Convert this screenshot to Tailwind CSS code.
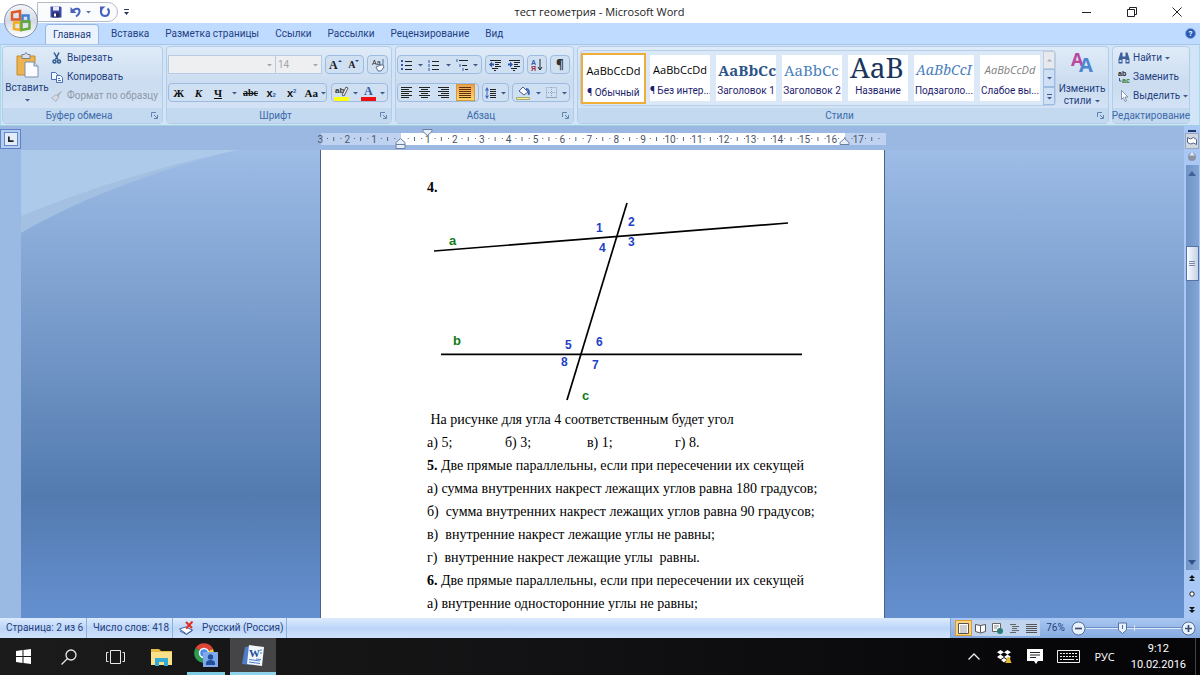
<!DOCTYPE html>
<html lang="ru">
<head>
  <meta charset="UTF-8" />
  <meta name="viewport" content="width=device-width, initial-scale=1.0" />
  <title>тест геометрия - Microsoft Word</title>
  <script src="https://cdn.jsdelivr.net/npm/@tailwindcss/browser@4"></script>
</head>
<body class="h-screen flex flex-col overflow-hidden whitespace-nowrap bg-white font-[Roboto,'Open_Sans',sans-serif] text-[10px] leading-3 text-[#1f3f7f]">

  <!-- Title bar -->
  <header class="relative flex h-[23px] shrink-0 items-center bg-white">
    <div class="ml-[37px] flex h-5 w-[81px] items-center gap-2 rounded-r-full border border-[#b5bcc8] bg-[#fafbfd] pl-3">
      <button aria-label="Сохранить">
        <svg class="size-3" viewBox="0 0 12 12"><path d="M.5.5h10l1 1v10H.5z" fill="#3d49a8"/><path d="M3 .5h6v4H3z" fill="#e8ecf8"/><path d="M2.500 6.500h7v5h-7z" fill="#222b66"/><path d="M4 7.500h2v3H4z" fill="#fff"/></svg>
      </button>
      <button aria-label="Отменить" class="flex items-center gap-1">
        <svg class="size-3" viewBox="0 0 12 12" fill="none" stroke="#4660bd" stroke-width="2"><path d="M3 4.500c3-3 7-2 6.500 1.500C9 8.500 7.500 9.500 6 10.500"/><path d="M.5 1v6h6z" fill="#4660bd" stroke="none"/></svg>
        <svg class="h-1 w-[5px]" viewBox="0 0 5 4"><path d="M0 1h5L2.500 3.500z" fill="#6275a5"/></svg>
      </button>
      <button aria-label="Повторить">
        <svg class="size-3" viewBox="0 0 12 12" fill="none" stroke="#4660bd" stroke-width="2"><path d="M8.500 2.500C11.200 5 10 10 6 10S.8 5.500 3 3"/><path d="M6.500.5H1v5z" fill="#4660bd" stroke="none"/></svg>
      </button>
    </div>
    <button aria-label="Настройка панели" class="ml-[6px]">
      <svg class="h-2 w-[5px]" viewBox="0 0 5 8"><path d="M0 1h5v1H0zM0 4h5L2.500 7z" fill="#2d3b62"/></svg>
    </button>
    <h1 class="flex-1 text-center font-['Open_Sans',sans-serif] text-[11px] text-[#222]">тест геометрия - Microsoft Word</h1>
    <div class="flex w-[130px] items-center justify-between pr-[18px]">
      <button aria-label="Свернуть" class="ml-3"><svg class="size-[10px]" viewBox="0 0 10 10"><path d="M0 5.500h9" stroke="#222"/></svg></button>
      <button aria-label="Восстановить"><svg class="size-[10px]" viewBox="0 0 10 10" fill="none" stroke="#222"><path d="M.5 2.500h7v7h-7zM2.500 2.500v-2h7v7h-2"/></svg></button>
      <button aria-label="Закрыть"><svg class="size-[10px]" viewBox="0 0 10 10" stroke="#222"><path d="M.5.5l9 9M9.500.5l-9 9"/></svg></button>
    </div>
    <button aria-label="Кнопка Office" class="absolute top-1 left-1 z-10 flex size-[34px] items-center justify-center rounded-full border border-[#8791a5] bg-linear-to-b from-[#f4f6fa] via-[#d3dae6] to-[#fdfeff]">
      <svg class="size-6" viewBox="0 0 24 24" fill="none" stroke-width="2.500">
        <path d="M3 3.500l8-1.500v8.500H3z" stroke="#dd5a26"/>
        <path d="M13.500 6.500h6v6h-6z" stroke="#3c83cf"/>
        <path d="M5 13.500h6.500V21L5 20z" stroke="#efae21"/>
        <path d="M12.500 12.500h8v7l-8 1.500z" stroke="#67a83a"/>
      </svg>
    </button>
  </header>

  <!-- Tabs -->
  <nav class="flex h-[21px] shrink-0 items-end bg-[#bfdbff] pl-[45px]">
    <a href="#" class="mr-1 flex h-5 items-center rounded-t-sm border border-b-0 border-[#94b7e4] bg-[#e9f2fd] px-[7px]">Главная</a>
    <a href="#" class="flex h-5 items-center px-2">Вставка</a>
    <a href="#" class="flex h-5 items-center px-2">Разметка страницы</a>
    <a href="#" class="flex h-5 items-center px-2">Ссылки</a>
    <a href="#" class="flex h-5 items-center px-2">Рассылки</a>
    <a href="#" class="flex h-5 items-center px-2">Рецензирование</a>
    <a href="#" class="flex h-5 items-center px-2">Вид</a>
    <button aria-label="Справка" class="mr-1 mb-[5px] ml-auto flex size-[11px] items-center justify-center rounded-full border border-[#7fa6e6] bg-[#2759b5] text-[8px] font-bold text-white">?</button>
  </nav>

  <!-- Ribbon -->
  <section class="flex h-[82px] shrink-0 gap-[3px] border border-t-[#a9c4e9] border-r-[#a6dcea] border-b-[#9fd0dd] border-l-[#a6dcea] bg-[#d2e4f8] p-px pr-[9px]">

    <!-- Clipboard -->
    <div class="flex w-[161px] flex-col rounded-sm border border-[#b3cde8] bg-linear-to-b from-[#dfebf8] via-[#cbdcf0] to-[#d9e8f8]">
      <div class="flex flex-1 gap-1 px-1">
        <button class="flex w-10 flex-col items-center pt-[5px]">
          <svg class="h-[26px] w-6" viewBox="0 0 24 26">
            <path d="M2 4h18v19H2z" fill="#edb44e" stroke="#c58a2d"/><path d="M7 2.500h2.500L11 .5l1.500 2H15v4H7z" fill="#dbe1ea" stroke="#77808f"/>
            <path d="M10 10h9l4 4v11H10z" fill="#fafcff" stroke="#7d8eb0"/><path d="M19 10v4h4" fill="#cbd8ee" stroke="#7d8eb0"/>
          </svg>
          <span class="mt-1">Вставить</span>
          <svg class="mt-1 h-1 w-[5px]" viewBox="0 0 5 4"><path d="M0 1h5L2.500 3.500z" fill="#405a8c"/></svg>
        </button>
        <div class="flex flex-col gap-[7px] pt-[5px]">
          <button class="flex items-center gap-1">
            <svg class="size-3" viewBox="0 0 12 12" fill="none" stroke="#31588f" stroke-width="1.500"><path d="M3 .5l4 7M8 .5l-3.500 7"/><circle cx="3.500" cy="9.500" r="1.500"/><circle cx="8" cy="9.500" r="1.500"/></svg>
            Вырезать
          </button>
          <button class="flex items-center gap-1">
            <svg class="size-3" viewBox="0 0 12 12" fill="#f2f7ff" stroke="#4a6fb4"><path d="M.5 1.500h4l2 2v5h-6z"/><path d="M5.500 4.500h4l2 2v5h-6z"/><path d="M7 7.500h2M7 9.500h3"/></svg>
            Копировать
          </button>
          <button class="flex items-center gap-1 text-[#8e98a8]" disabled>
            <svg class="size-3" viewBox="0 0 12 12"><path d="M11.500.5L7 7 5 5.500 9 2z" fill="#a9b0bb"/><path d="M5 4.500l3 2.500-3 4.500L.5 8z" fill="#d6dae0" stroke="#9aa3b0" stroke-width=".7"/></svg>
            Формат по образцу
          </button>
        </div>
      </div>
      <div class="flex h-[15px] items-center bg-[#c2d9f0] px-1 text-[#3e6aaa]">
        <span class="flex-1 text-center">Буфер обмена</span>
        <svg class="size-[7px]" viewBox="0 0 7 7" fill="none" stroke="#6683ad"><path d="M.5 5V.5H5M3 3l3 3M6.500 3v3.500H3"/></svg>
      </div>
    </div>

    <!-- Font -->
    <div class="flex w-[226px] flex-col rounded-sm border border-[#b3cde8] bg-linear-to-b from-[#dfebf8] via-[#cbdcf0] to-[#d9e8f8]">
      <div class="flex flex-1 flex-col gap-[9px] px-px pt-2">
        <div class="flex h-[19px] gap-[3px]">
          <div class="flex">
            <label class="relative flex w-[108px]">
              <select aria-label="Шрифт" disabled class="w-full appearance-none border border-[#b9cbe2] bg-[#eeeff1]"></select>
              <svg class="absolute top-[8px] right-1 h-1 w-[5px]" viewBox="0 0 5 4"><path d="M0 1h5L2.500 3.500z" fill="#a0a7b2"/></svg>
            </label>
            <label class="relative flex w-[46px]">
              <select aria-label="Размер" disabled class="w-full appearance-none border border-l-0 border-[#b9cbe2] bg-[#eeeff1] pl-[2px] text-[10px] text-[#a2a5aa]"><option>14</option></select>
              <svg class="absolute top-[8px] right-1 h-1 w-[5px]" viewBox="0 0 5 4"><path d="M0 1h5L2.500 3.500z" fill="#a0a7b2"/></svg>
            </label>
          </div>
          <div class="flex w-[39px] rounded-sm border border-[#9dbbdf] bg-[#d0e0f3] font-['Liberation_Serif',serif] font-bold text-[#222]">
            <button class="flex flex-1 items-center justify-center text-[12px]">A<svg class="mb-2 h-1 w-1" viewBox="0 0 4 4"><path d="M0 3L2 1l2 2z" fill="#26457f"/></svg></button>
            <button class="flex flex-1 items-center justify-center">A<svg class="mb-2 h-1 w-1" viewBox="0 0 4 4"><path d="M0 1h4L2 3z" fill="#26457f"/></svg></button>
          </div>
          <button aria-label="Очистить формат" class="flex w-[21px] items-center justify-center rounded-sm border border-[#9dbbdf] bg-[#d0e0f3]">
            <svg class="size-[14px]" viewBox="0 0 14 14"><text x="1" y="7" font-size="7" font-family="Liberation Sans" fill="#222">Aa</text><path d="M12 1v6" stroke="#5c6f93"/><path d="M5 9l5-2h2l1 2-3 4H7z" fill="#fdfdff" stroke="#5c6f93"/></svg>
          </button>
        </div>
        <div class="flex h-[19px] gap-1 text-[#111]">
          <div class="flex w-[159px] items-center rounded-sm border border-[#9dbbdf] bg-[#d0e0f3] font-['Liberation_Serif',serif] text-[11px] font-bold">
            <button class="w-5">Ж</button>
            <button class="w-5 italic">К</button>
            <button class="w-5 underline">Ч</button>
            <svg class="mx-1 h-1 w-[5px]" viewBox="0 0 5 4"><path d="M0 1h5L2.500 3.500z" fill="#405a8c"/></svg>
            <button class="w-5 text-[10px] line-through">abc</button>
            <button class="flex w-[22px] items-end justify-center font-['Liberation_Sans',sans-serif]">x<span class="text-[6px] leading-2 text-[#2d5fae]">2</span></button>
            <button class="flex w-[20px] items-start justify-center font-['Liberation_Sans',sans-serif]">x<span class="text-[6px] leading-2 text-[#2d5fae]">2</span></button>
            <button class="w-5">Aa</button>
            <svg class="h-1 w-[5px]" viewBox="0 0 5 4"><path d="M0 1h5L2.500 3.500z" fill="#405a8c"/></svg>
          </div>
          <div class="flex w-[57px] items-center justify-around rounded-sm border border-[#9dbbdf] bg-[#d0e0f3]">
            <button aria-label="Цвет выделения">
              <svg class="h-4 w-[15px]" viewBox="0 0 15 16"><text x="1" y="8" font-size="8" font-weight="bold" font-family="Liberation Sans" fill="#333">ab</text><path d="M8 10l4-8 2 1-4 8z" fill="#f8f6d8" stroke="#556"/><path d="M0 12h15v4H0z" fill="#ffff10"/></svg>
            </button>
            <svg class="h-1 w-[5px]" viewBox="0 0 5 4"><path d="M0 1h5L2.500 3.500z" fill="#405a8c"/></svg>
            <button aria-label="Цвет текста">
              <svg class="h-4 w-[15px]" viewBox="0 0 15 16"><text x="3" y="10" font-size="12" font-weight="bold" font-family="Liberation Serif" fill="#31589e">A</text><path d="M0 12h15v4H0z" fill="#ee1010"/></svg>
            </button>
            <svg class="h-1 w-[5px]" viewBox="0 0 5 4"><path d="M0 1h5L2.500 3.500z" fill="#405a8c"/></svg>
          </div>
        </div>
      </div>
      <div class="flex h-[15px] items-center bg-[#c2d9f0] px-1 text-[#3e6aaa]">
        <span class="flex-1 text-center">Шрифт</span>
        <svg class="size-[7px]" viewBox="0 0 7 7" fill="none" stroke="#6683ad"><path d="M.5 5V.5H5M3 3l3 3M6.500 3v3.500H3"/></svg>
      </div>
    </div>

    <!-- Paragraph -->
    <div class="flex w-[179px] flex-col rounded-sm border border-[#b3cde8] bg-linear-to-b from-[#dfebf8] via-[#cbdcf0] to-[#d9e8f8]">
      <div class="flex flex-1 flex-col gap-[9px] px-px pt-2">
        <div class="flex h-[19px] gap-[3px]">
          <div class="flex w-[85px] items-center justify-around rounded-sm border border-[#9dbbdf] bg-[#d0e0f3]">
            <button aria-label="Маркеры"><svg class="size-3" viewBox="0 0 12 12"><path d="M4 2.500h7M4 6.500h7M4 10.500h7" stroke="#222"/><path d="M0 1h2v2H0zM0 5h2v2H0zM0 9h2v2H0z" fill="#3057a8"/></svg></button>
            <svg class="h-1 w-[5px]" viewBox="0 0 5 4"><path d="M0 1h5L2.500 3.500z" fill="#405a8c"/></svg>
            <button aria-label="Нумерация"><svg class="size-3" viewBox="0 0 12 12"><path d="M4 2.500h7M4 6.500h7M4 10.500h7" stroke="#222"/><path d="M1 1v3M1 5v3M1 9v3" stroke="#3057a8"/></svg></button>
            <svg class="h-1 w-[5px]" viewBox="0 0 5 4"><path d="M0 1h5L2.500 3.500z" fill="#405a8c"/></svg>
            <button aria-label="Многоуровневый список"><svg class="size-3" viewBox="0 0 12 12"><path d="M3 1.500h9M6 6.500h5M9 10.500h3" stroke="#222"/><path d="M1 0v3M4 5v3M7 9v3" stroke="#3057a8"/></svg></button>
            <svg class="h-1 w-[5px]" viewBox="0 0 5 4"><path d="M0 1h5L2.500 3.500z" fill="#405a8c"/></svg>
          </div>
          <div class="flex w-[39px] items-center justify-around rounded-sm border border-[#9dbbdf] bg-[#d0e0f3]">
            <button aria-label="Уменьшить отступ"><svg class="size-3" viewBox="0 0 12 12"><path d="M1 1.500h11M6 3.500h6M6 5.500h4M6 7.500h6M3 9.500h6M5 11.500h2" stroke="#222"/><path d="M0 5.500l3-3v2h2v2H3v2z" fill="#3057a8"/></svg></button>
            <button aria-label="Увеличить отступ"><svg class="size-3" viewBox="0 0 12 12"><path d="M1 1.500h11M6 3.500h6M6 5.500h4M6 7.500h6M3 9.500h6M5 11.500h2" stroke="#222"/><path d="M5 5.500l-3-3v2H0v2h2v2z" fill="#3057a8"/></svg></button>
          </div>
          <button aria-label="Сортировка" class="flex w-[20px] items-center justify-center rounded-sm border border-[#9dbbdf] bg-[#d0e0f3]">
            <svg class="size-3" viewBox="0 0 12 12"><text x="0" y="6" font-size="7" font-weight="bold" font-family="Liberation Sans" fill="#3057a8">А</text><text x="0" y="12" font-size="7" font-weight="bold" font-family="Liberation Sans" fill="#9c2a35">Я</text><path d="M9 0v10M7 8l2 3 2-3" fill="none" stroke="#222"/></svg>
          </button>
          <button class="flex w-[20px] items-center justify-center rounded-sm border border-[#9dbbdf] bg-[#d0e0f3] font-['Open_Sans',sans-serif] text-[12px] font-bold text-[#333]">¶</button>
        </div>
        <div class="flex h-[19px] gap-[3px]">
          <div class="flex w-[82px] items-center justify-around rounded-sm border border-[#9dbbdf] bg-[#d0e0f3]">
            <button aria-label="По левому краю"><svg class="h-[11px] w-3" viewBox="0 0 12 11" stroke="#222"><path d="M0 .5h11M0 2.500h8M0 4.500h11M0 6.500h8M0 8.500h11M0 10.500h8"/></svg></button>
            <button aria-label="По центру"><svg class="h-[11px] w-3" viewBox="0 0 12 11" stroke="#222"><path d="M0 .5h11M2 2.500h7M0 4.500h11M2 6.500h7M0 8.500h11M2 10.500h7"/></svg></button>
            <button aria-label="По правому краю"><svg class="h-[11px] w-3" viewBox="0 0 12 11" stroke="#222"><path d="M0 .5h11M3 2.500h8M0 4.500h11M3 6.500h8M0 8.500h11M3 10.500h8"/></svg></button>
            <button aria-label="По ширине" class="flex h-[17px] w-[19px] items-center justify-center border border-[#d69a3c] bg-linear-to-b from-[#f0a050] to-[#ffd76b]"><svg class="h-[11px] w-3" viewBox="0 0 12 11" stroke="#5b3208"><path d="M0 .5h12M0 2.500h12M0 4.500h12M0 6.500h12M0 8.500h12M0 10.500h12"/></svg></button>
          </div>
          <div class="flex w-[27px] items-center justify-around rounded-sm border border-[#9dbbdf] bg-[#d0e0f3]">
            <button aria-label="Интервал"><svg class="size-3" viewBox="0 0 12 12"><path d="M5 2.500h6M5 4.500h6M5 6.500h6M5 8.500h6M5 10.500h6" stroke="#222"/><path d="M2 0l2 3.500H0zM2 12l2-3.500H0zM1.500 3h1v6h-1z" fill="#3b66bd"/></svg></button>
            <svg class="h-1 w-[5px]" viewBox="0 0 5 4"><path d="M0 1h5L2.500 3.500z" fill="#405a8c"/></svg>
          </div>
          <div class="flex w-[58px] items-center justify-around rounded-sm border border-[#9dbbdf] bg-[#d0e0f3]">
            <button aria-label="Заливка"><svg class="h-[14px] w-[15px]" viewBox="0 0 15 14"><path d="M3 5l4-4 5 5-4 3z" fill="#f6f9ff" stroke="#4a5f8a"/><path d="M10 3c3 0 3.500 3 2.500 6" stroke="#3b66bd" stroke-width="1.800" fill="none"/><path d="M.5 11.500h13v2H.5z" fill="#f4f3a0" stroke="#a9a972"/></svg></button>
            <svg class="h-1 w-[5px]" viewBox="0 0 5 4"><path d="M0 1h5L2.500 3.500z" fill="#405a8c"/></svg>
            <button aria-label="Границы"><svg class="size-[11px]" viewBox="0 0 11 11" fill="none" stroke="#93a3bd"><path d="M.5.5h10v10H.5zM5.500 0v11M0 5.500h11" stroke-dasharray="1 1"/><path d="M0 10.500h11"/></svg></button>
            <svg class="h-1 w-[5px]" viewBox="0 0 5 4"><path d="M0 1h5L2.500 3.500z" fill="#405a8c"/></svg>
          </div>
        </div>
      </div>
      <div class="flex h-[15px] items-center bg-[#c2d9f0] px-1 text-[#3e6aaa]">
        <span class="flex-1 text-center">Абзац</span>
        <svg class="size-[7px]" viewBox="0 0 7 7" fill="none" stroke="#6683ad"><path d="M.5 5V.5H5M3 3l3 3M6.500 3v3.500H3"/></svg>
      </div>
    </div>

    <!-- Styles -->
    <div class="flex min-w-0 flex-1 flex-col rounded-sm border border-[#b3cde8] bg-linear-to-b from-[#dfebf8] via-[#cbdcf0] to-[#d9e8f8]">
      <div class="flex flex-1 items-start pt-[3px] pl-[2px]">
        <div class="flex min-w-0 flex-1 rounded-sm border border-[#b8cfe9] bg-[#dbe8f8]">
          <div class="grid h-[54px] min-w-0 flex-1 grid-cols-7 items-center text-center text-[#1e1e6e]">
            <button class="mr-px flex h-[51px] flex-col overflow-hidden border-2 border-[#efad3a] bg-white">
              <span class="flex h-8 w-full items-center justify-center font-['Open_Sans',sans-serif] text-[11px] text-black">AaBbCcDd</span><span class="w-full">¶ Обычный</span>
            </button>
            <button class="mx-[3px] flex h-[46px] flex-col overflow-hidden bg-white">
              <span class="flex h-[30px] w-full items-center justify-center font-['Open_Sans',sans-serif] text-[11px] text-black">AaBbCcDd</span><span class="w-full">¶ Без интер...</span>
            </button>
            <button class="mx-[3px] flex h-[46px] flex-col overflow-hidden bg-white">
              <span class="flex h-[30px] w-full items-center overflow-hidden pl-[2px] font-['Noto_Serif','DejaVu_Serif',serif] text-[15px] font-bold text-[#2c5488]">AaBbCc</span><span class="w-full">Заголовок 1</span>
            </button>
            <button class="mx-[3px] flex h-[46px] flex-col overflow-hidden bg-white">
              <span class="flex h-[30px] w-full items-center overflow-hidden pl-[2px] font-['Noto_Serif','DejaVu_Serif',serif] text-[15px] text-[#4a81bd]">AaBbCc</span><span class="w-full">Заголовок 2</span>
            </button>
            <button class="mx-[3px] flex h-[46px] flex-col overflow-hidden bg-white">
              <span class="flex h-[30px] w-full items-start overflow-hidden pl-[2px] font-['Noto_Serif','DejaVu_Serif',serif] text-[28px] leading-6 text-[#1b365d]">AaB</span><span class="w-full">Название</span>
            </button>
            <button class="mx-[3px] flex h-[46px] flex-col overflow-hidden bg-white">
              <span class="flex h-[30px] w-full items-center overflow-hidden pl-[2px] font-['Noto_Serif','DejaVu_Serif',serif] text-[14px] text-[#4a81bd] italic">AaBbCcI</span><span class="w-full">Подзаголо...</span>
            </button>
            <button class="mx-[3px] flex h-[46px] flex-col overflow-hidden bg-white">
              <span class="flex h-[30px] w-full items-center justify-center font-['Open_Sans',sans-serif] text-[11px] text-[#808080] italic">AaBbCcDd</span><span class="w-full">Слабое вы...</span>
            </button>
          </div>
          <div class="flex w-3 flex-col">
            <button aria-label="Вверх" class="flex flex-1 items-center justify-center border border-[#c4ccd8] bg-[#e6e9ee]"><svg class="h-1 w-[5px]" viewBox="0 0 5 4"><path d="M0 3.500h5L2.500 1z" fill="#a7adb8"/></svg></button>
            <button aria-label="Вниз" class="flex flex-1 items-center justify-center border border-[#9fbde2] bg-[#cfe0f5]"><svg class="h-1 w-[5px]" viewBox="0 0 5 4"><path d="M0 1h5L2.500 3.500z" fill="#405a8c"/></svg></button>
            <button aria-label="Все стили" class="flex flex-1 items-center justify-center border border-[#9fbde2] bg-[#cfe0f5]"><svg class="h-[7px] w-[5px]" viewBox="0 0 5 7"><path d="M0 1h5v1H0zM0 4h5L2.500 6.500z" fill="#405a8c"/></svg></button>
          </div>
        </div>
        <button class="flex w-[52px] flex-col items-center">
          <svg class="h-7 w-[26px]" viewBox="0 0 26 28" font-family="Open Sans" font-weight="bold">
            <text x="2" y="16" font-size="18" fill="#b9489f">A</text>
            <text x="10" y="22" font-size="20" fill="#4b86cf">A</text>
          </svg>
          <span class="mt-[5px]">Изменить</span>
          <span class="flex items-center gap-1">стили <svg class="h-1 w-[5px]" viewBox="0 0 5 4"><path d="M0 1h5L2.500 3.500z" fill="#405a8c"/></svg></span>
        </button>
      </div>
      <div class="flex h-[15px] items-center bg-[#c2d9f0] px-1 text-[#3e6aaa]">
        <span class="flex-1 text-center">Стили</span>
        <svg class="size-[7px]" viewBox="0 0 7 7" fill="none" stroke="#6683ad"><path d="M.5 5V.5H5M3 3l3 3M6.500 3v3.500H3"/></svg>
      </div>
    </div>

    <!-- Editing -->
    <div class="flex w-[78px] flex-col rounded-sm border border-[#b3cde8] bg-linear-to-b from-[#dfebf8] via-[#cbdcf0] to-[#d9e8f8]">
      <div class="flex flex-1 flex-col gap-[7px] pt-[5px] pl-[5px]">
        <button class="flex items-center gap-[3px]">
          <svg class="size-3" viewBox="0 0 12 12"><path d="M2.500.5h2v4h3v-4h2L11.500 7v4.500h-4V7h-3v4.500h-4V7z" fill="#3d5f9a"/><path d="M1.500 8h2v2h-2zM8.500 8h2v2h-2z" fill="#c8d8f0"/></svg>
          Найти
          <svg class="h-1 w-[5px]" viewBox="0 0 5 4"><path d="M0 1h5L2.500 3.500z" fill="#405a8c"/></svg>
        </button>
        <button class="flex items-center gap-[3px]">
          <svg class="size-3" viewBox="0 0 12 12" font-family="Liberation Sans" font-weight="bold" font-size="7"><text x="0" y="5" fill="#222">ab</text><text x="4" y="12" fill="#2b7a2b">ac</text><path d="M1.500 7v3h2" fill="none" stroke="#3057a8"/></svg>
          Заменить
        </button>
        <button class="flex items-center gap-[3px]">
          <svg class="size-3" viewBox="0 0 12 12"><path d="M3.500.5v9l2-2 1.500 4 1.500-.7L7 7h3z" fill="#fff" stroke="#6b7f9f" stroke-width=".8"/></svg>
          Выделить
          <svg class="h-1 w-[5px]" viewBox="0 0 5 4"><path d="M0 1h5L2.500 3.500z" fill="#405a8c"/></svg>
        </button>
      </div>
      <div class="flex h-[15px] items-center justify-center bg-[#c2d9f0] text-[#3e6aaa]">Редактирование</div>
    </div>
  </section>

  <!-- Workspace -->
  <main class="flex min-h-0 flex-1">
    <div class="flex min-w-0 flex-1 flex-col">
      <div class="flex h-6 shrink-0 bg-[#9ab8e1]">
        <button aria-label="Табуляция" class="mt-[3px] flex h-5 w-[21px] items-center justify-center border border-[#5b83c6] bg-[#b5cdf0]">
          <svg class="size-[14px] border border-[#6488c4] bg-[#e3edfa]" viewBox="0 0 14 14"><path d="M4.500 4v5.500H10" fill="none" stroke="#222" stroke-width="2"/></svg>
        </button>
        <div class="flex flex-1 justify-center">
          <svg id="ruler" class="h-6 w-[567px] overflow-visible" viewBox="0 0 567 24"></svg>
        </div>
      </div>
      <div class="flex min-h-0 flex-1">
        <div class="w-[21px] bg-[#9bbae3]"></div>
        <div class="relative flex flex-1 justify-center overflow-hidden bg-linear-to-b from-[#9dbce6] via-[#537bb0] via-74% to-[#6590d0]">
          <svg class="absolute top-0 left-0 h-[84px] w-[218px]" viewBox="0 0 218 84">
            <path d="M0 0h216C120 24 50 54 0 83z" fill="#a3c0e2"/>
            <path d="M0 0h216C130 18 60 42 0 66z" fill="#aecaeb"/>
          </svg>

          <!-- Page -->
          <article class="z-10 w-[565px] border-x border-[#4c6288] bg-white pt-[26px] pl-[106px] font-['Liberation_Serif',serif] text-[14px] leading-[23px] text-black">
            <p class="font-bold">4.</p>
            <svg class="h-[209px] w-[400px]" viewBox="427 199 400 209" font-family="Liberation Sans" font-size="12" font-weight="bold">
              <g stroke="#000" stroke-width="1.700">
                <path d="M434 251L788 223"/>
                <path d="M441 354.300H802"/>
                <path d="M627 203L567 400"/>
              </g>
              <g fill="#1e3fc8">
                <text x="596" y="232">1</text><text x="628" y="226">2</text>
                <text x="599" y="252">4</text><text x="628" y="246">3</text>
                <text x="565" y="349">5</text><text x="596" y="346">6</text>
                <text x="561" y="366">8</text><text x="592" y="369">7</text>
              </g>
              <g fill="#117a17" font-size="13">
                <text x="449" y="245">a</text><text x="453" y="345">b</text><text x="582" y="400">c</text>
              </g>
            </svg>
            <p class="whitespace-pre"> На рисунке для угла 4 соответственным будет угол</p>
            <p class="grid grid-cols-[78px_82px_88px_1fr]"><span>а) 5;</span><span>б) 3;</span><span>в) 1;</span><span>г) 8.</span></p>
            <p><b>5.</b> Две прямые параллельны, если при пересечении их секущей</p>
            <p>а) сумма внутренних накрест лежащих углов равна 180 градусов;</p>
            <p class="whitespace-pre">б)  сумма внутренних накрест лежащих углов равна 90 градусов;</p>
            <p class="whitespace-pre">в)  внутренние накрест лежащие углы не равны;</p>
            <p class="whitespace-pre">г)  внутренние накрест лежащие углы  равны.</p>
            <p><b>6.</b> Две прямые параллельны, если при пересечении их секущей</p>
            <p>а) внутренние односторонние углы не равны;</p>
          </article>
        </div>
      </div>
    </div>

    <!-- Scrollbar -->
    <div class="flex w-4 flex-col items-center bg-[#a9c8f5]">
      <div class="mt-1 h-[2px] w-2 bg-[#24386b]"></div>
      <button aria-label="Линейка" class="mt-px flex h-4 w-[14px] items-center justify-center border border-[#99a6bb] bg-[#cfd6e0]">
        <svg class="size-[10px]" viewBox="0 0 10 10"><path d="M.5 1.500l3 1.500 3-1.500 3 2v5l-3-1.500-3 1-3-1.500z" fill="#fff" stroke="#53648a"/></svg>
      </button>
      <svg class="my-[2px] size-3" viewBox="0 0 12 12"><circle cx="6" cy="6" r="4" fill="#8a94a6"/><path d="M3 4.500h6L6 1.500z" fill="#e6ebf3"/></svg>
      <div class="flex w-[13px] flex-1 flex-col items-center bg-linear-to-r from-[#6f94c6] to-[#83a6d4]">
        <svg class="mt-[6px] h-[5px] w-2" viewBox="0 0 8 5"><path d="M0 5h8L4 0z" fill="#42609a"/></svg>
        <div class="mt-[70px] flex h-[35px] w-full items-center justify-center border border-[#57739f] bg-linear-to-r from-[#fafcff] to-[#c3d1e6]">
          <svg class="size-[6px]" viewBox="0 0 6 6" stroke="#7d8ba6"><path d="M0 .5h6M0 2.500h6M0 4.500h6"/></svg>
        </div>
        <svg class="mt-auto mb-[5px] h-[5px] w-2" viewBox="0 0 8 5"><path d="M0 0h8L4 5z" fill="#34508a"/></svg>
      </div>
      <div class="flex h-12 flex-col items-center justify-around">
        <svg class="size-[6px]" viewBox="0 0 6 6" fill="#111"><path d="M0 3l3-3 3 3zM0 6l3-3 3 3z"/></svg>
        <svg class="size-[6px]" viewBox="0 0 6 6"><circle cx="3" cy="3" r="2.200" fill="#fff" stroke="#222"/></svg>
        <svg class="size-[6px]" viewBox="0 0 6 6" fill="#111"><path d="M0 0l3 3 3-3zM0 3l3 3 3-3z"/></svg>
      </div>
    </div>
  </main>

  <!-- Status bar -->
  <footer class="flex h-5 shrink-0 items-stretch bg-linear-to-b from-[#dcebfe] via-[#bdd6f8] to-[#cfe2fb]">
    <span class="flex w-[87px] items-center border-r border-[#8fb0dd] pl-[6px]">Страница: 2 из 6</span>
    <span class="flex w-[86px] items-center border-r border-[#8fb0dd] pl-[6px]">Число слов: 418</span>
    <span class="flex w-[114px] items-center gap-2 border-r border-[#8fb0dd] pl-[6px]">
      <svg class="h-[14px] w-[15px]" viewBox="0 0 15 14"><path d="M.5 8l6-2 7 3-6 4z" fill="#fff" stroke="#41659f"/><path d="M1 10l6.500 3.500 6-4" fill="none" stroke="#41659f"/><path d="M7 1l6 6M13.500.5L7 7.500" stroke="#dd2f1e" stroke-width="2"/></svg>
      Русский (Россия)
    </span>
    <div class="ml-auto flex items-center border-l border-[#7ea3d8] bg-linear-to-b from-[#a9c7f2] to-[#85abdf] pl-1">
      <button aria-label="Разметка" class="flex h-4 w-[17px] items-center justify-center border border-[#d99a37] bg-[#fdd27b]"><svg class="size-[11px]" viewBox="0 0 11 11"><path d="M.5.5h10v10H.5z" fill="#fff" stroke="#555"/><path d="M2 3h7M2 5h7M2 7h7M2 9h7" stroke="#777" stroke-width=".7"/></svg></button>
      <button aria-label="Чтение" class="flex h-4 w-[17px] items-center justify-center bg-[#c2d5ef]"><svg class="size-[11px]" viewBox="0 0 11 11"><path d="M.5 1.500l5 1 5-1v7l-5 1.500-5-1.500zM5.500 2.500v7" fill="#fff" stroke="#555"/></svg></button>
      <button aria-label="Веб-документ" class="flex h-4 w-[17px] items-center justify-center bg-[#c2d5ef]"><svg class="size-[11px]" viewBox="0 0 11 11"><path d="M.5.5h8v8h-8z" fill="#fff" stroke="#666"/><path d="M2 3h5M2 5h3" stroke="#888"/><circle cx="8" cy="8" r="3" fill="#2d7c77"/></svg></button>
      <button aria-label="Структура" class="flex h-4 w-[17px] items-center justify-center bg-[#c2d5ef]"><svg class="size-[11px]" viewBox="0 0 11 11" stroke="#666"><path d="M1 1.500h6M3 3.500h7M3 5.500h5M3 7.500h7M1 9.500h6"/></svg></button>
      <button aria-label="Черновик" class="flex h-4 w-[17px] items-center justify-center bg-[#c2d5ef]"><svg class="size-[11px]" viewBox="0 0 11 11" stroke="#555"><path d="M0 1.500h11M0 3.500h11M0 5.500h11M0 7.500h11M0 9.500h11"/></svg></button>
      <span class="w-[31px] text-center">76%</span>
      <button aria-label="Уменьшить"><svg class="size-[15px]" viewBox="0 0 15 15"><circle cx="7.500" cy="7.500" r="6.500" fill="#e9f1fc" stroke="#54709f"/><path d="M4 7.500h7" stroke="#3d4f70" stroke-width="1.700"/></svg></button>
      <svg class="h-4 w-[95px]" viewBox="0 0 95 16"><path d="M0 8.500h95" stroke="#dce9fb"/><path d="M0 7.500h95" stroke="#6d90c4"/><path d="M48.500 5v6" stroke="#dce9fb"/><path d="M32.500 3h8v7l-4 3.500-4-3.500z" fill="#e9f1fc" stroke="#54709f"/><path d="M36.500 5v4" stroke="#54709f"/></svg>
      <button aria-label="Увеличить" class="mr-1"><svg class="size-[15px]" viewBox="0 0 15 15"><circle cx="7.500" cy="7.500" r="6.500" fill="#e9f1fc" stroke="#54709f"/><path d="M4 7.500h7M7.500 4v7" stroke="#3d4f70" stroke-width="1.700"/></svg></button>
    </div>
  </footer>

  <!-- Taskbar -->
  <footer class="flex h-[37px] shrink-0 items-stretch bg-linear-to-r from-[#1b1b1b] via-[#111113] to-[#050508] text-white">
    <button aria-label="Пуск" class="flex w-[46px] items-center justify-center"><svg class="size-[15px]" viewBox="0 0 15 15" fill="#fff"><path d="M0 2l6.500-1v6H0zM7.500.9L15 0v7H7.500zM0 8h6.500v6L0 13zM7.500 8H15v7l-7.500-1z"/></svg></button>
    <button aria-label="Поиск" class="flex w-[46px] items-center justify-center"><svg class="size-4" viewBox="0 0 16 16" fill="none" stroke="#e8e8e8" stroke-width="1.300"><circle cx="10" cy="6" r="5"/><path d="M6.500 9.500L.5 15.500"/></svg></button>
    <button aria-label="Представление задач" class="flex w-[46px] items-center justify-center"><svg class="h-[14px] w-[19px]" viewBox="0 0 19 14" fill="none" stroke="#e8e8e8"><path d="M4.500.5h10v13h-10zM2.500 2.500h-2v9h2M16.500 2.500h2v9h-2"/></svg></button>
    <button aria-label="Проводник" class="flex w-[46px] items-center justify-center"><svg class="h-[18px] w-[21px]" viewBox="0 0 21 18"><path d="M0 1h8l2 2h11v14H0z" fill="#e9bd45"/><path d="M0 4h21v13H0z" fill="#fbe18a"/><path d="M4 18v-8h13v8h-4v-4H8v4z" fill="#35a9d8"/></svg></button>
    <button aria-label="Chrome" class="mr-[2px] flex w-11 flex-col items-center"><span class="flex flex-1 items-center"><svg class="size-6" viewBox="0 0 24 24"><path d="M10 10L1.500 5A10 10 0 0 1 19 6z" fill="#dd4437"/><path d="M10 10l9-4a10 10 0 0 1-9 14z" fill="#f7c92f"/><path d="M10 10v10A10 10 0 0 1 1.500 5z" fill="#2f9b50"/><circle cx="10" cy="10" r="4.500" fill="#4a8af0" stroke="#fff" stroke-width="1.500"/><path d="M9 9h15v15H9z" fill="#7fa9ea"/><circle cx="16.500" cy="14" r="2.700" fill="#234f9e"/><path d="M12 22v-2c0-4 9-4 9 0v2z" fill="#234f9e"/></svg></span><span class="h-[3px] w-[38px] bg-[#7fcbe0]"></span></button>
    <button aria-label="Word" class="flex w-[46px] flex-col items-center bg-[#454547]"><span class="flex flex-1 items-center"><svg class="h-[21px] w-[22px]" viewBox="0 0 22 21"><path d="M3 2l6-1v19l-9-1z" fill="#4d7cc9"/><path d="M7 0l15 2-2 19-15-2z" fill="#f2f6fd"/><text x="7" y="12" font-size="11" font-weight="bold" font-family="Liberation Serif" fill="#234f9e">W</text><path d="M14 14l5 .5M7 14.500l11 1.500M7 17l11 1.500M18 5h2M18 8h2" stroke="#4d7cc9"/></svg></span><span class="h-[3px] w-full bg-[#8ed3ea]"></span></button>
    <div class="ml-auto flex items-center font-['Open_Sans',sans-serif]">
      <svg class="h-[7px] w-3" viewBox="0 0 12 7" fill="none" stroke="#eee" stroke-width="1.300"><path d="M.5 6.500L6 1l5.500 5.500"/></svg>
      <svg class="ml-[17px] h-[14px] w-[15px]" viewBox="0 0 15 14"><path d="M3.500 0L7 2.300 3.500 4.600 0 2.300zM10.500 0L14 2.300l-3.500 2.300L7 2.300zM3.500 4.600L7 7 3.500 9.300 0 7zM10.500 4.600L14 7l-3.500 2.300L7 7zM7 8l3 2-3 2.500L4 10z" fill="#fff"/><path d="M8 13c2-1 1-6 3.500-6S13 12 15 13z" fill="#e8b92c"/></svg>
      <svg class="ml-[15px] h-[15px] w-4" viewBox="0 0 16 15"><path d="M0 0h16v12h-5l-2 3-2-3H0z" fill="#fff"/><path d="M3 3.500h10M3 6h10M3 8.500h6" stroke="#222"/></svg>
      <svg class="ml-[14px] h-[13px] w-6" viewBox="0 0 24 13" fill="none" stroke="#eee"><path d="M.5.5h22v12H.5z"/><path d="M3 3.500h18M3 6.500h18" stroke-dasharray="2 1"/><path d="M3 9.500h2M6 9.500h11M19 9.500h2"/></svg>
      <span class="ml-[13px] text-[11px]">РУС</span>
      <div class="ml-4 text-center font-[Roboto,sans-serif] text-[11px] leading-4"><div>9:12</div><div>10.02.2016</div></div>
      <div class="ml-[9px] h-full w-[5px] border-l border-[#444]"></div>
    </div>
  </footer>

  <script>
    // horizontal ruler: 1 cm = 26.9px
    const ruler = document.getElementById('ruler');
    const cm = 26.9;
    const zero = 82;
    let marks = `<rect x="2" y="7" width="565" height="12" fill="#bfd3f0"/>
      <rect x="${zero}" y="7" width="444" height="12" fill="#fff"/>`;

    for (let i = -3; i <= 17; i++) {
      const x = zero + i * cm;
      if (i !== 0) {
        marks += `<text x="${x}" y="17" font-size="10" text-anchor="middle" fill="#4a5568">${Math.abs(i)}</text>`;
      }
      marks += `<path d="M${x + cm / 2} 11v4" stroke="#59647a"/>`;
      marks += `<path d="M${x + cm / 4} 12.500h1M${x + cm * 3 / 4} 12.500h1" stroke="#59647a"/>`;
    }

    // indent markers
    marks += `<path d="M${zero + cm - 5} 3.500h9v2l-4.500 4-4.500-4z" fill="#e6eefa" stroke="#6d7f9f"/>
      <path d="M${zero - 5} 22.500v-6l4.500-4 4.500 4v6zM${zero - 5} 18.500h9" fill="#e6eefa" stroke="#6d7f9f"/>
      <path d="M${zero + 439} 18.500v-2l4.500-4 4.500 4v2z" fill="#e6eefa" stroke="#6d7f9f"/>`;
    ruler.innerHTML = marks;
  </script>

</body>
</html>
